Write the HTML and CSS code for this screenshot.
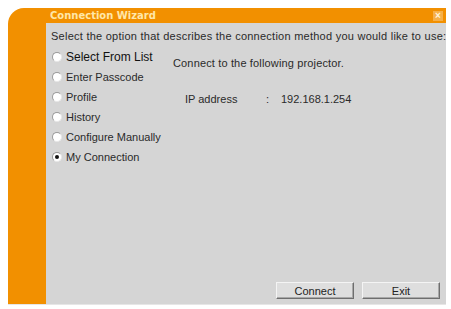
FILE: index.html
```html
<!DOCTYPE html>
<html>
<head>
<meta charset="utf-8">
<link rel="stylesheet" href="styles.css">
</head>
<body>
<div class="window">
  <div class="titlebar">
    <span class="title">Connection Wizard</span>
    <span class="close">×</span>
  </div>
  <div class="side"></div>
  <div class="content">
    <div class="intro">Select the option that describes the connection method you would like to use:</div>
    <div class="main">
      <ul class="options">
        <li class="opt first"><span class="radio"></span>Select From List</li>
        <li class="opt"><span class="radio"></span>Enter Passcode</li>
        <li class="opt"><span class="radio"></span>Profile</li>
        <li class="opt"><span class="radio"></span>History</li>
        <li class="opt"><span class="radio"></span>Configure Manually</li>
        <li class="opt"><span class="radio checked"></span>My Connection</li>
      </ul>
      <div class="panel">
        <div class="panel-head">Connect to the following projector.</div>
        <div class="field">
          <span class="label">IP address</span>
          <span class="colon">:</span>
          <span class="value">192.168.1.254</span>
        </div>
      </div>
    </div>
    <div class="buttons">
      <button class="btn">Connect</button>
      <button class="btn">Exit</button>
    </div>
  </div>
</div>
</body>
</html>
```

FILE: styles.css
```css
html, body {
  margin: 0;
  padding: 0;
  background: #ffffff;
}
body {
  font-family: "Liberation Sans", Arial, sans-serif;
  font-size: 11px;
  color: #2a2a2a;
}
.window {
  margin: 8px 5px 0 8px;
  width: 438px;
  height: 296px;
  background: #f29000;
  border-top-left-radius: 16px;
  display: grid;
  grid-template-columns: 38px minmax(0, 1fr);
  grid-template-rows: 15px minmax(0, 1fr);
  border-bottom: 1px solid #e6e6e6;
}
.titlebar {
  grid-column: 2;
  grid-row: 1;
  display: flex;
  align-items: center;
  justify-content: space-between;
  padding: 0 3px 0 4px;
}
.title {
  font-family: "DejaVu Sans", Verdana, sans-serif;
  color: #ffe7a8;
  font-weight: bold;
  font-size: 10px;
}
.close {
  width: 10px;
  height: 10px;
  line-height: 10px;
  text-align: center;
  color: #fff4dc;
  background: #f6b04a;
  font-size: 10px;
  font-weight: bold;
}
.side {
  grid-column: 1;
  grid-row: 2;
}
.content {
  grid-column: 2;
  grid-row: 2;
  background: #d5d5d5;
  display: grid;
  grid-template-columns: minmax(0, 1fr);
  grid-template-rows: auto 1fr auto;
  padding: 7px 6px 5px 5px;
}
.intro {
  line-height: 13px;
  white-space: nowrap;
  letter-spacing: 0.25px;
}
.main {
  display: flex;
  padding-top: 4px;
}
.options {
  list-style: none;
  margin: 0;
  padding: 0 0 0 1px;
  width: 121px;
}
.opt {
  height: 20px;
  display: flex;
  align-items: center;
  gap: 4px;
  white-space: nowrap;
}
.opt.first {
  font-size: 12px;
  color: #111;
}
.radio {
  width: 8px;
  height: 8px;
  border-radius: 50%;
  background: #ffffff;
  border: 1px solid #9a9a9a;
  border-right-color: #e8e8e8;
  border-bottom-color: #e8e8e8;
  display: inline-flex;
  align-items: center;
  justify-content: center;
  flex: none;
}
.radio.checked::after {
  content: "";
  width: 4px;
  height: 4px;
  border-radius: 50%;
  background: #111;
}
.panel {
  padding-top: 10px;
}
.panel-head {
  line-height: 13px;
  letter-spacing: 0.15px;
}
.field {
  display: flex;
  margin-top: 23px;
  padding-left: 12px;
  line-height: 13px;
}
.label {
  width: 81px;
}
.colon {
  width: 15px;
}
.buttons {
  display: flex;
  justify-content: flex-end;
  gap: 8px;
}
.btn {
  font-family: "Liberation Sans", Arial, sans-serif;
  font-size: 11px;
  color: #222;
  width: 78px;
  height: 17px;
  padding: 0;
  background: #dedede;
  border: 1px solid;
  border-color: #f4f4f4 #6e6e6e #6e6e6e #f4f4f4;
  box-shadow: inset -1px -1px 0 #a8a8a8;
}
```
